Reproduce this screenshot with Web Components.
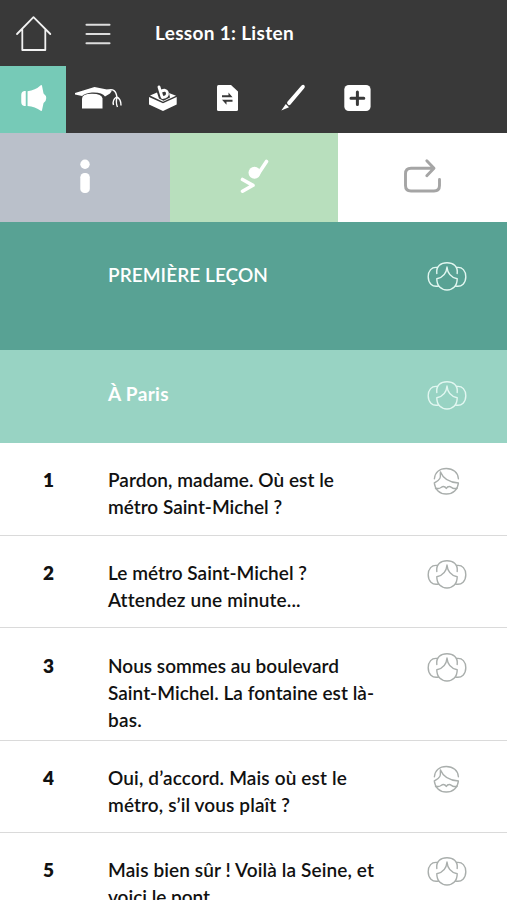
<!DOCTYPE html>
<html lang="fr">
<head>
<meta charset="utf-8">
<title>Lesson 1: Listen</title>
<style>
  body{
    margin:0;
    height:900px;
    overflow:hidden;
    background:#fff;
    font-family:Lato, "Open Sans", sans-serif;
  }
</style>
</head>
<body>
<lesson-header>
  <text-line width="139">Lesson 1: Listen</text-line>
</lesson-header>
<lesson-modes></lesson-modes>
<dialog-line kind="lesson" speaker="woman"><text-line width="160">PREMIÈRE LEÇON</text-line></dialog-line>
<dialog-line kind="title" speaker="woman"><text-line width="61">À Paris</text-line></dialog-line>
<dialog-line number="1" speaker="man">
  <text-line width="226">Pardon, madame. Où est le</text-line>
  <text-line width="174">métro Saint-Michel ?</text-line>
</dialog-line>
<dialog-line number="2" speaker="woman">
  <text-line width="199">Le métro Saint-Michel ?</text-line>
  <text-line width="192">Attendez une minute...</text-line>
</dialog-line>
<dialog-line number="3" speaker="woman">
  <text-line width="231">Nous sommes au boulevard</text-line>
  <text-line width="266">Saint-Michel. La fontaine est là-</text-line>
  <text-line width="34">bas.</text-line>
</dialog-line>
<dialog-line number="4" speaker="man">
  <text-line width="239">Oui, d’accord. Mais où est le</text-line>
  <text-line width="182">métro, s’il vous plaît ?</text-line>
</dialog-line>
<dialog-line number="5" speaker="woman">
  <text-line width="266">Mais bien sûr ! Voilà la Seine, et</text-line>
  <text-line width="102">voici le pont</text-line>
</dialog-line>

<script>
const headerTemplate = document.createElement('template');
headerTemplate.innerHTML = `
<style>
  :host{
    display:block;
    height:133px;
    background:#393939;
    color:#fff;
  }
  .bar{
    display:flex;
    align-items:center;
    height:66px;
  }
  .bar svg{
    flex:none;
  }
  .title{
    margin-left:31px;
    padding-bottom:2px;
    font-size:19px;
    line-height:27px;
    font-weight:700;
  }
  nav{
    display:flex;
    height:67px;
  }
  nav svg{
    display:block;
    width:65px;
    height:67px;
    fill:#fff;
  }
  nav svg.active{
    background:#76cab7;
    width:65.5px;
    margin-right:-0.5px;
  }
</style>
<div class="bar">
  <svg width="124" height="66" fill="none" stroke="#f2f2f2" stroke-width="1.8" stroke-linecap="round" stroke-linejoin="round">
    <path d="M17 34 33.5 17.2 50.3 34M22.3 29.3V50H45.3V29.3"/>
    <path stroke="#ddd" stroke-width="2.1" d="M86.5 24.8H109.5M86.5 34H109.5M86.5 43.2H109.5"/>
  </svg>
  <div class="title"><slot></slot></div>
</div>
<nav>
  <svg class="active" viewBox="0 0 65 67">
    <path d="M25.5 25V40H24Q21 39.5 21 36V29Q21 25.5 24 25ZM27.3 25.2Q35 24.5 40.5 19.3Q41.5 18.5 41.8 20L43.3 27.5Q46 29.5 46 32Q46 35.5 43.3 37L41.8 44Q41.5 45.5 40.5 44.8Q35 40.5 27.3 40Z"/>
  </svg>
  <svg viewBox="0 0 65 67">
    <path d="M10 27 29.5 21 47 24.5 45 27.5 40 30.5Q37 26 27 26.5 20 27 17 30L10 28.5Z"/>
    <path d="M17 42.5V32.5Q17 27.7 27 27.7 37 27.7 37.5 32.5V42.5Z"/>
    <path fill="none" stroke="#fff" stroke-width="1.4" d="M42 24.5Q51 21 52 32M51.5 31Q47 34 48.5 39M52 31Q50.5 37 52.5 41M52 31Q56 33 56 39.5"/>
  </svg>
  <svg viewBox="0 0 65 67">
    <path d="M19 31 33 37.3 46.7 31V38.5L33 45 19 38.5Z"/>
    <path d="M20 29.5 27 26.6 29 32.5 33.5 34.7 40 31.5 39 27 46 29.8 33 35.7Z"/>
    <path fill="none" stroke="#fff" stroke-width="2.9" stroke-linecap="round" d="M29 21 32 30.8M31 25.5Q36 22.7 37.3 26.5 38.3 30.8 32.5 31.5"/>
  </svg>
  <svg viewBox="0 0 65 67">
    <path d="M23.5 19H36L43 25.5V43.5Q43 45 41.5 45H23.5Q22 45 22 43.5V20.5Q22 19 23.5 19Z"/>
    <path fill="#393939" d="M27 29.3H33.5V26.5L37.5 31.3H27ZM37.5 33.8H27L31.5 38.7V35.8H37.5Z"/>
  </svg>
  <svg viewBox="0 0 65 67">
    <path d="M41.3 19.7Q43.2 18 44.5 19.5 45.5 20.8 44 22.6L30.3 38.8Q29.5 39.5 28.4 39 26.5 37.5 27.2 36ZM25.8 38 29 41.3 21.3 44.5Z"/>
  </svg>
  <svg viewBox="0 0 65 67">
    <rect x="19.3" y="19" width="26.3" height="26" rx="4.5"/>
    <path fill="none" stroke="#393939" stroke-width="3" stroke-linecap="round" d="M32.4 26V38.5M26 32.2H38.8"/>
  </svg>
</nav>
`;

class LessonHeader extends HTMLElement {
  constructor() {
    super();
    this.attachShadow({mode:'open'}).appendChild(headerTemplate.content.cloneNode(true));
  }
}

const modesTemplate = document.createElement('template');
modesTemplate.innerHTML = `
<style>
  :host{
    display:grid;
    grid-template-columns:169.5px 168.5px 169px;
    height:89px;
  }
  svg{
    display:block;
    width:100%;
    height:89px;
  }
  .info{
    background:#bac0ca;
  }
  .exercise{
    background:#b8dfbd;
  }
</style>
<div class="info">
  <svg fill="#fff"><circle cx="85" cy="31.3" r="4.7"/><rect x="80.3" y="40" width="9.5" height="20" rx="4.3"/></svg>
</div>
<div class="exercise">
  <svg fill="none" stroke="#fff" stroke-width="3.6" stroke-linecap="round" stroke-linejoin="round">
    <circle cx="84.5" cy="39.8" r="6" fill="#fff" stroke="none"/>
    <path d="M88.5 40.5 96.5 28.5M72.5 46.5 83 52.3 72.5 58.2"/>
  </svg>
</div>
<div>
  <svg fill="none" stroke="#a5a5a5" stroke-width="2.9" stroke-linecap="round" stroke-linejoin="round">
    <path d="M95 35.2H73Q67.500 35.2 67.500 40.7V52.500Q67.500 58 73 58H96Q101.500 58 101.500 52.500V46.500M88.8 27.8 96 35.2 88.8 42.8"/>
  </svg>
</div>
`;

class LessonModes extends HTMLElement {
  constructor() {
    super();
    this.attachShadow({mode:'open'}).appendChild(modesTemplate.content.cloneNode(true));
  }
}

const faces = {
  woman: `
    <path d="M10.5 6.5C4.5 5.5 1.2 10 1.2 15.8S5 26.5 11.5 25M29.5 6.5C35.5 5.5 38.8 10 38.8 15.8S35 26.5 28.5 25"/>
    <path d="M9.8 12.5C9 5 14 1.7 20 1.7S31 5 30.2 12.5"/>
    <path d="M20 6C19.5 12 15.5 16.5 9.8 17.8C9.8 25 14 29 20 29S30.2 25 30.2 17.8C24.5 16.5 20.5 12 20 6Z"/>`,
  man: `
    <path d="M7.4 12.7C8 6.5 12.5 2.5 19.3 2.5S31 6.5 31.4 12.7"/>
    <path d="M13.5 6C13 8.500 14 10.5 12.8 12.5C11.5 15 9.500 16 7.3 17C8 23.500 12.5 28 19.3 28S30.8 23.500 31.4 17C24 16.500 16.500 13.5 13.5 6"/>
    <path d="M8.5 22.500H11.500C13.500 22.500 14.500 20.500 16.300 20.500C18 20.500 18.500 21 19.3 22.500C20 21 20.700 20.500 22.300 20.500C24 20.500 25 22.500 27 22.500H30"/>`
};

const lineTemplate = document.createElement('template');
lineTemplate.innerHTML = `
<style>
  :host{
    display:grid;
    grid-template-columns:108px 319px 40px;
    box-sizing:border-box;
    min-height:92.7px;
    padding:23.2px 0 7px;
    border-bottom:1px solid #dadada;
    color:#111;
    font-size:19px;
    font-weight:600;
    line-height:27px;
  }
  :host([kind]){
    border:none;
    color:#fff;
  }
  :host([kind="lesson"]){
    min-height:128px;
    padding-top:39px;
    background:#58a294;
    font-weight:600;
  }
  :host([kind="title"]){
    min-height:93px;
    padding-top:30px;
    background:#98d3c3;
    font-weight:700;
  }
  .number{
    padding-left:43px;
    font-weight:800;
  }
  svg{
    width:40px;
    height:30px;
    fill:none;
    stroke:#a9aeac;
    stroke-width:1.4;
    stroke-linejoin:round;
    stroke-linecap:round;
  }
  :host([kind]) svg{
    stroke:#e2f7f1;
  }
</style>
<div class="number"></div>
<div><slot></slot></div>
<svg viewBox="0 0 40 30"></svg>
`;

class DialogLine extends HTMLElement {
  constructor() {
    super();
    this.attachShadow({mode:'open'}).appendChild(lineTemplate.content.cloneNode(true));
  }
  connectedCallback() {
    this.shadowRoot.querySelector('.number').textContent = this.getAttribute('number') || '';
    this.shadowRoot.querySelector('svg').innerHTML = faces[this.getAttribute('speaker')];
  }
}

//one line of text, tracked so that it fills its width
class TextLine extends HTMLElement {
  constructor() {
    super();
    this.attachShadow({mode:'open'}).innerHTML = `
      <style>
        :host{
          display:block;
          white-space:nowrap;
        }
      </style>
      <span><slot></slot></span>`;
  }
  connectedCallback() {
    let span = this.shadowRoot.querySelector('span');
    let spare = this.getAttribute('width') - span.getBoundingClientRect().width;
    span.style.letterSpacing = (spare / this.textContent.length) + 'px';
  }
}

window.customElements.define('lesson-header', LessonHeader);
window.customElements.define('lesson-modes', LessonModes);
window.customElements.define('dialog-line', DialogLine);
window.customElements.define('text-line', TextLine);
</script>
</body>
</html>
